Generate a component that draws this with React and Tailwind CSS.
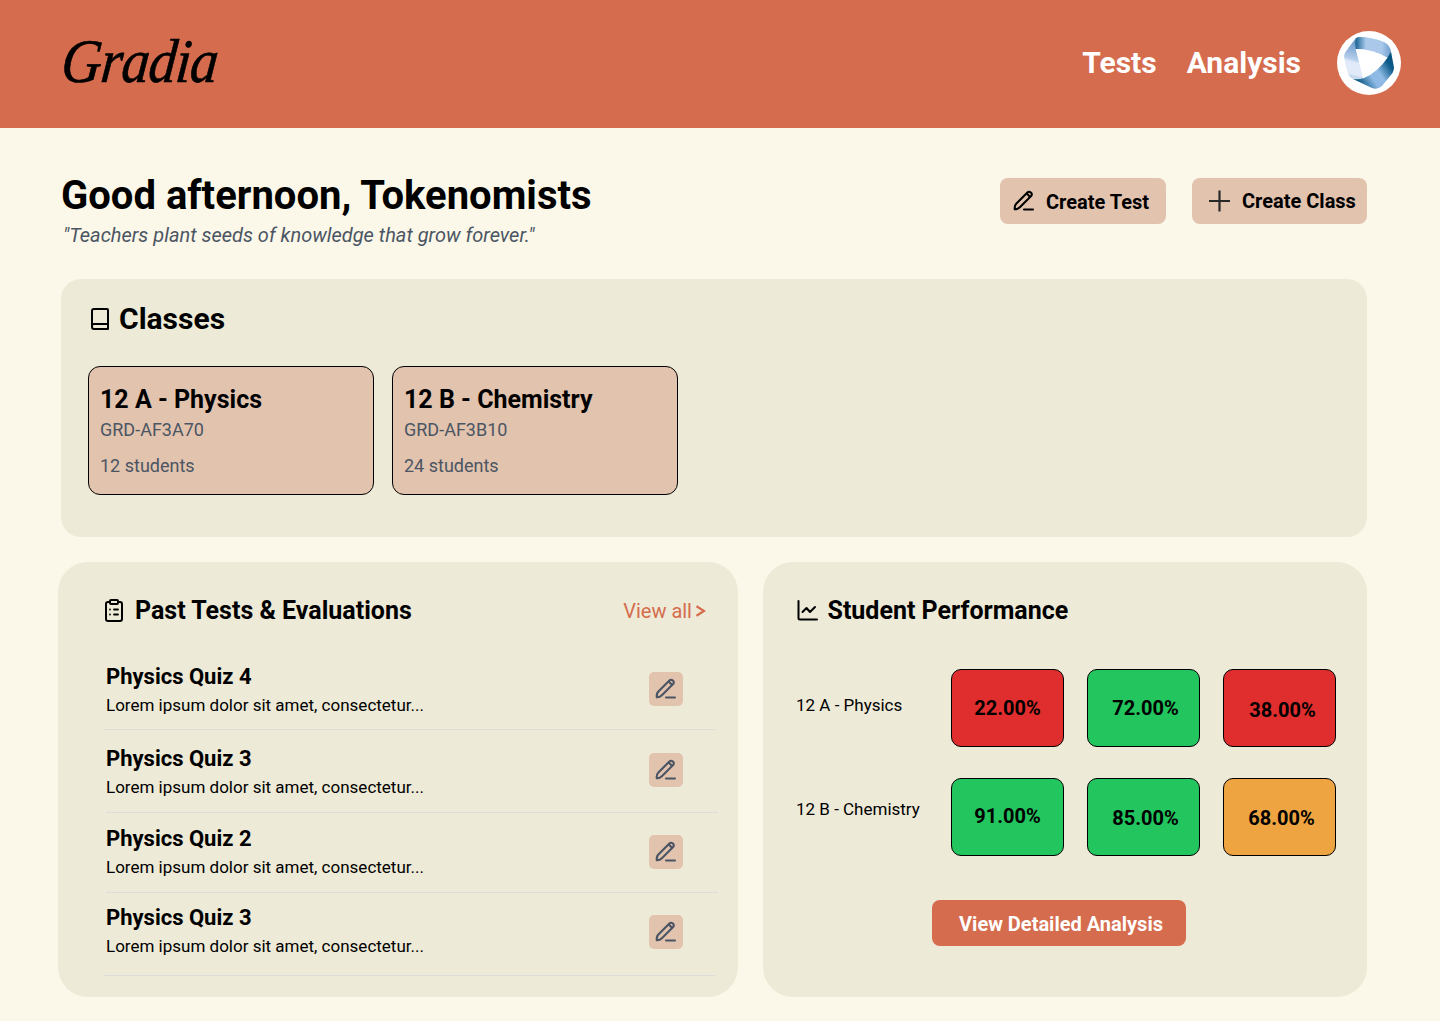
const pen = "M2.800 20.300c-.4-2.900.1-4.300 1.600-5.800L15.400 3.400a2.300 2.300 0 0 1 3.300 0l.4.4a2.300 2.300 0 0 1 0 3.300L8.100 18.100c-1.500 1.500-2.800 2.400-5.300 2.200Z";

function Pen({ className }) {
  return (
    <svg viewBox="0 0 24 24" className={className} fill="none" stroke="currentColor" strokeWidth="2.100" strokeLinecap="round" strokeLinejoin="round">
      <path d={pen} />
      <path d="m15 4.800 2.700 2.700M12 20.500H21" />
    </svg>
  );
}

function Book() {
  return (
    <svg viewBox="0 0 24 24" className="h-6 w-6" fill="none" stroke="currentColor" strokeWidth="2" strokeLinejoin="round">
      <path d="M20 17V3a1 1 0 0 0-1-1H6a2 2 0 0 0-2 2v16a2 2 0 0 0 2 2h14v-5H6a2 2 0 0 0-2 2" />
    </svg>
  );
}

function Clipboard() {
  return (
    <svg viewBox="0 0 24 24" className="h-6 w-6" fill="none" stroke="currentColor" strokeWidth="2" strokeLinecap="round" strokeLinejoin="round">
      <path d="M8 3H6a2 2 0 0 0-2 2v15a2 2 0 0 0 2 2h12a2 2 0 0 0 2-2V5a2 2 0 0 0-2-2h-2" />
      <rect x="8" y="1" width="8" height="4" rx="1" />
      <path d="M8 10.500h.01M8 15.500h.01M12 10.500h4M12 15.500h4" strokeWidth="1.800" />
    </svg>
  );
}

function Chart() {
  return (
    <svg viewBox="0 0 24 24" className="h-6 w-6" fill="none" stroke="currentColor" strokeWidth="2" strokeLinecap="round" strokeLinejoin="round">
      <path d="M2.500 2v17a1.500 1.500 0 0 0 1.500 1.500h17" />
      <path d="m6.500 13 4-4 3.500 4 5-5" />
    </svg>
  );
}

function Avatar() {
  return (
    <svg viewBox="0 0 64 64" className="h-16 w-16">
      <defs>
        <linearGradient id="top" x1="0" x2="1">
          <stop offset="0" stopColor="#125f92" />
          <stop offset=".3" stopColor="#a9c8ea" />
          <stop offset=".75" stopColor="#a9c8ea" />
          <stop offset="1" stopColor="#6c9ecb" />
        </linearGradient>
        <linearGradient id="right" gradientUnits="userSpaceOnUse" x1="57" y1="30" x2="22" y2="53">
          <stop offset="0" stopColor="#04547f" />
          <stop offset=".15" stopColor="#0d5c8b" />
          <stop offset=".45" stopColor="#8fbae6" />
          <stop offset=".65" stopColor="#8fbae6" />
          <stop offset="1" stopColor="#06547f" />
        </linearGradient>
        <linearGradient id="left" gradientUnits="userSpaceOnUse" x1="20" y1="12" x2="12" y2="44">
          <stop offset="0" stopColor="#6f9ccb" />
          <stop offset=".5" stopColor="#b4cdea" />
          <stop offset=".6" stopColor="#e0eaf8" />
          <stop offset=".95" stopColor="#e0eaf8" />
          <stop offset="1" stopColor="#c6d9ef" />
        </linearGradient>
      </defs>
      <circle cx="32" cy="32" r="32" fill="#fff" />
      <path d="M18.500 7.500 8.500 21Q7 23 7 26 8.500 36 11.500 43.500q1 3 4 4.200L26.500 48 19 18Z" fill="url(#left)" />
      <path d="M18.500 7.500Q19.500 6 22 6q14 0 26 5.500 5 3 6 9l-3.700 6.500Q34 18 18.700 18Q17.500 12 18.500 7.500Z" fill="url(#top)" />
      <path d="m54 20.500 3 16q0 3-1.500 5.500L45 55q-4.500 4-10 2L16 48q6 .5 10.300-.7Q41 41 50.300 26.700Z" fill="url(#right)" />
      <path d="M18.700 18q17 0 31.600 8.700Q41 40 26.300 47.300Z" fill="#fff" />
    </svg>
  );
}

const classes = [
  { name: "12 A - Physics", code: "GRD-AF3A70", students: "12 students" },
  { name: "12 B - Chemistry", code: "GRD-AF3B10", students: "24 students" },
];

const tests = [
  { name: "Physics Quiz 4", row: "h-[73px]", text: "pt-[7px]", button: "mt-[15px]", line: "-ml-[3px] w-[612px]" },
  { name: "Physics Quiz 3", row: "h-[83px]", text: "pt-[16px]", button: "mt-[23px]", line: "w-[612px]" },
  { name: "Physics Quiz 2", row: "h-[80px]", text: "pt-[13px]", button: "mt-[22px]", line: "w-[612px]" },
  { name: "Physics Quiz 3", row: "h-[83px]", text: "pt-[12px]", button: "mt-[22px]", line: "-ml-[3px] w-[612px]" },
];

const scores = [
  { value: "22.00%", tone: "bg-[#e02d2d] pb-px" },
  { value: "72.00%", tone: "bg-[#22c55e] pl-[4px] pb-px" },
  { value: "38.00%", tone: "bg-[#e02d2d] pl-[6px] pt-[3px]" },
  { value: "91.00%", tone: "bg-[#22c55e] pb-[3px]" },
  { value: "85.00%", tone: "bg-[#22c55e] pl-[4px] pt-px" },
  { value: "68.00%", tone: "bg-[#eda441] pl-[4px] pt-px" },
];

export default function App() {
  return (
    <div className="h-[1024px] w-[1440px] overflow-hidden bg-white font-['Roboto',sans-serif] text-black">
      <div className="h-[1021px] bg-[#fcf8e9]">
        <header className="flex h-32 justify-between bg-[#d56c4e] pl-[62px] pr-[39px] text-white">
          <div className="mt-[29px] h-16 origin-left -skew-x-6 scale-x-90 whitespace-nowrap font-['Mistral','Brush_Script_MT','Z003','Liberation_Serif',cursive] text-[62px] italic leading-[64px] tracking-[-1px] text-black [-webkit-text-stroke:0.6px_black]">Gradia</div>
          <nav className="mt-[30px] flex h-16 items-center text-[30px] font-bold">
            <a className="mr-[30px]">Tests</a>
            <a className="mr-[36px]">Analysis</a>
            <div className="mt-0.5"><Avatar /></div>
          </nav>
        </header>

        <section className="flex h-[151px] justify-between pl-[61px] pr-[73px] pt-[43px]">
          <div>
            <h1 className="mt-px whitespace-nowrap text-[40px] font-bold leading-[48px]">Good afternoon, Tokenomists</h1>
            <p className="ml-[2px] mt-[3px] text-[20px] italic leading-6 text-[#4b5563]">"Teachers plant seeds of knowledge that grow forever."</p>
          </div>
          <div className="mt-[7px] flex h-[46px] gap-[26px] whitespace-nowrap text-[20px] font-bold">
            <button className="flex w-[166px] items-center rounded-lg bg-[#e2c3ae] pl-3 pt-0.5">
              <Pen className="mb-0.5 mr-[10px] h-6 w-6" />
              Create Test
            </button>
            <button className="flex w-[175px] items-center rounded-lg bg-[#e2c3ae] pl-4">
              <svg viewBox="0 0 22 22" className="mb-px mr-3 h-[22px] w-[22px]" stroke="#292929" strokeWidth="2.200"><path d="M11.500 .5v21M1 11h21" /></svg>
              Create Class
            </button>
          </div>
        </section>

        <main className="pl-[58px] pr-[73px]">
          <section className="ml-[3px] h-[258px] rounded-[20px] bg-[#edead7] px-[27px] pt-[21px]">
            <h2 className="flex h-9 items-center gap-[7px] text-[30px] font-bold"><span className="mt-0.5"><Book /></span>Classes</h2>
            <div className="mt-[30px] flex gap-[18px]">
              {classes.map((item) => (
                <article key={item.code} className="h-[129px] w-[286px] rounded-xl border border-black bg-[#e2c3ae] pl-[11px] pt-[18px]">
                  <h3 className="text-[25px] font-bold leading-[30px]">{item.name}</h3>
                  <p className="mt-[4px] text-[18px] leading-[22px] text-[#4b5563]">{item.code}</p>
                  <p className="mt-[14px] text-[18px] leading-[22px] text-[#4b5563]">{item.students}</p>
                </article>
              ))}
            </div>
          </section>

          <div className="mt-[25px] flex h-[435px] gap-[25px]">
            <section className="w-[680px] rounded-[30px] bg-[#edead7] pl-[48px] pt-[33px]">
              <div className="flex h-8 items-center">
                <h2 className="-ml-[4px] flex items-center gap-[9px] text-[25px] font-bold"><Clipboard />Past Tests & Evaluations</h2>
                <a className="ml-auto mr-[32px] flex items-center gap-1 text-[20px] text-[#d56c4e]">View all
                  <svg viewBox="0 0 10 12" className="h-3 w-[10px]" fill="none" stroke="currentColor" strokeWidth="2.200"><path d="M.5 1.200 8 6 .5 10.800" /></svg>
                </a>
              </div>
              <ul className="mt-[30px]">
                {tests.map((test, i) => (
                  <li key={i} className={"flex flex-col justify-between " + test.row}>
                    <div className="flex">
                      <div className={"w-[543px] " + test.text}>
                        <h3 className="text-[22px] font-bold leading-[26px]">{test.name}</h3>
                        <p className="mt-[5px] text-[17px] leading-5">Lorem ipsum dolor sit amet, consectetur...</p>
                      </div>
                      <button className={"flex h-[34px] w-[34px] items-center justify-center rounded-[5px] bg-[#e2c3ae] text-[#4b5563] " + test.button}>
                        <Pen className="h-6 w-6" />
                      </button>
                    </div>
                    <div className={"h-px shrink-0 bg-[#dddedb] " + test.line} />
                  </li>
                ))}
              </ul>
            </section>

            <section className="w-[604px] rounded-[30px] bg-[#edead7] pl-[33px] pt-[33px]">
              <h2 className="flex h-8 items-center gap-[7.5px] text-[25px] font-bold"><Chart />Student Performance</h2>
              <div className="mt-[42px] flex">
                <div className="w-[155px] whitespace-nowrap text-[17px] leading-5">
                  <p className="mt-[26px]">12 A - Physics</p>
                  <p className="mt-[84px]">12 B - Chemistry</p>
                </div>
                <div className="grid grid-cols-[113px_113px_113px] grid-rows-[78px_78px] gap-x-[23px] gap-y-[31px]">
                  {scores.map((score) => (
                    <div key={score.value} className={"flex items-center justify-center rounded-[10px] border border-black text-[20px] font-bold " + score.tone}>{score.value}</div>
                  ))}
                </div>
              </div>
              <button className="ml-[136px] mt-[44px] flex h-[46px] w-[254px] items-center justify-center rounded-lg bg-[#d56c4e] pl-[4px] pt-0.5 text-[20px] font-bold text-white">View Detailed Analysis</button>
            </section>
          </div>
        </main>
      </div>
    </div>
  );
}
